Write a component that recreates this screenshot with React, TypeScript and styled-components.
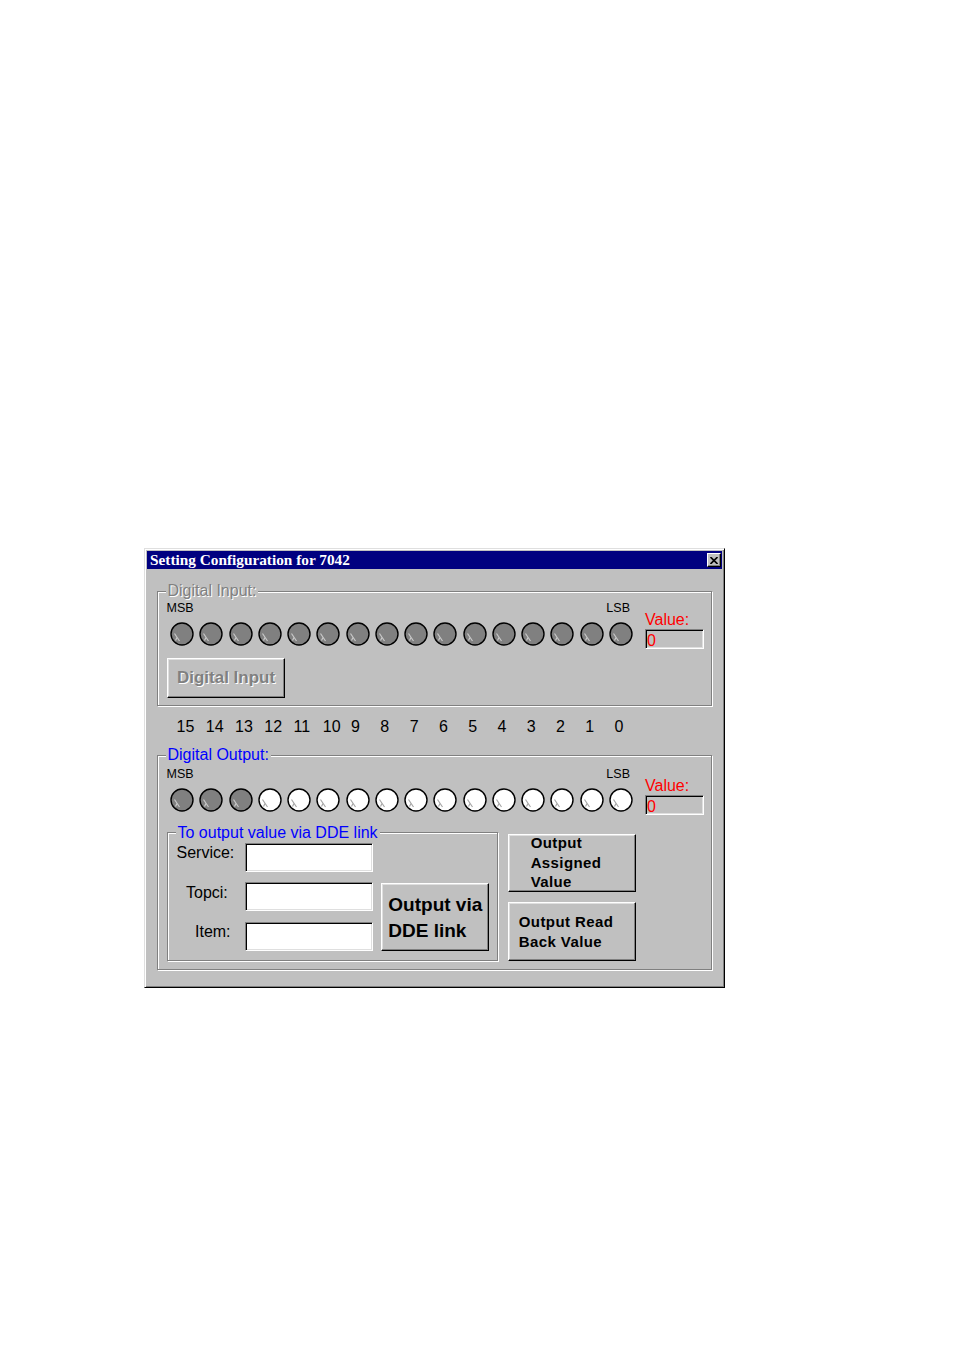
import React from 'react'
import styled, { createGlobalStyle } from 'styled-components'

const GlobalStyle = createGlobalStyle`
  html, body {
    margin: 0;
    padding: 0;
    background: #fff;
  }
  body {
    font-family: "Liberation Sans", Arial, sans-serif;
    color: #000;
  }
`

const Page = styled.div`
  padding: 548px 0 0 144px;
  min-height: 1351px;
  box-sizing: border-box;
`

const Window = styled.div`
  width: 581px;
  height: 440px;
  box-sizing: border-box;
  background: #c0c0c0;
  border: 1px solid;
  border-color: #dfdfdf #000 #000 #dfdfdf;
  box-shadow: inset 1px 1px 0 #fff, inset -1px -1px 0 #808080;
  padding: 2px;
`

const TitleBar = styled.div`
  height: 18px;
  background: #000080;
  display: flex;
  align-items: center;
  justify-content: space-between;
  padding: 0 1px 0 3px;
`

const Title = styled.span`
  font-family: "Liberation Serif", "Times New Roman", serif;
  font-weight: bold;
  font-size: 15.3px;
  line-height: 18px;
  color: #fff;
  white-space: nowrap;
`

const CloseButton = styled.div`
  width: 14px;
  height: 14px;
  box-sizing: border-box;
  background: #c0c0c0;
  border: 1px solid;
  border-color: #fff #000 #000 #fff;
  box-shadow: inset -1px -1px 0 #808080;
  display: flex;
  align-items: center;
  justify-content: center;
`

const Body = styled.div`
  padding: 14px 10px 0 10px;
`

const GroupBox = styled.fieldset<{ $top: number; $bottom: number }>`
  margin: 0;
  min-width: 0;
  box-sizing: border-box;
  padding: ${p => p.$top}px 8px ${p => p.$bottom}px 8px;
  border: 1px solid #808080;
  box-shadow: inset 1px 1px 0 #fff, 1px 1px 0 #fff;
`

const Legend = styled.legend<{ $color: string; $etched?: boolean }>`
  padding: 0 2px 0 1.5px;
  font-size: 16px;
  line-height: 16px;
  background: #c0c0c0;
  color: ${p => p.$color};
  text-shadow: ${p => (p.$etched ? '1px 1px 0 #fff' : 'none')};
  white-space: nowrap;
`

const BitRow = styled.div`
  display: flex;
  align-items: flex-start;
`

const BitColumn = styled.div`
  width: 472px;
  flex: none;
  display: flex;
  flex-direction: column;
  align-items: flex-start;
`

const EndLabels = styled.div`
  align-self: stretch;
  display: flex;
  justify-content: space-between;
  padding: 0 8px 0 0.5px;
  font-size: 12.5px;
  line-height: 14px;
`

const LedGrid = styled.div`
  display: grid;
  grid-template-columns: repeat(16, 29.27px);
  margin: 7px 0 0 4px;
`

const LedSvg = styled.svg`
  display: block;
  width: 24px;
  height: 24px;
`

const ValueColumn = styled.div`
  margin-left: 7px;
  padding-top: 9px;
  display: flex;
  flex-direction: column;
`

const ValueLabel = styled.div`
  color: #f00;
  font-size: 16px;
  line-height: 19px;
`

const ValueBox = styled.div`
  width: 59px;
  height: 20px;
  box-sizing: border-box;
  overflow: hidden;
  border: 1px solid;
  border-color: #808080 #fff #fff #808080;
  box-shadow: inset 1px 1px 0 #000, inset -1px -1px 0 #dfdfdf;
  padding: 1.5px 0 0 1px;
  color: #f00;
  font-size: 16px;
  line-height: 18px;
`

const NumberGrid = styled.div`
  display: grid;
  grid-template-columns: repeat(16, 29.27px);
  margin: 12px 0 11px 13px;
  font-size: 16px;
  line-height: 18px;
`

const BitNumber = styled.span<{ $wide: boolean }>`
  padding-left: ${p => (p.$wide ? 6.5 : 5.5)}px;
`

const RaisedButton = styled.button`
  margin: 0;
  padding: 0;
  box-sizing: border-box;
  flex: none;
  background: #c0c0c0;
  border: 1px solid;
  border-color: #fff #000 #000 #fff;
  box-shadow: inset -1px -1px 0 #808080, inset 1px 1px 0 #dfdfdf;
  display: flex;
  align-items: center;
  justify-content: center;
  overflow: hidden;
  font-family: "Liberation Sans", Arial, sans-serif;
  font-weight: bold;
  color: #000;
  text-align: left;
`

const DisabledButton = styled(RaisedButton)`
  width: 118.7px;
  height: 40px;
  margin-top: 12px;
  margin-left: 0.7px;
  font-size: 17px;
  color: #808080;
  text-shadow: 1px 1px 0 #fff;
`

const DdeButton = styled(RaisedButton)`
  width: 108px;
  height: 68px;
  margin-left: 8.3px;
  padding-top: 3px;
  align-self: flex-end;
  font-size: 19px;
  line-height: 26px;
`

const SideButton = styled(RaisedButton)<{ $height: number; $drop: number }>`
  width: 128px;
  height: ${p => p.$height}px;
  padding: ${p => p.$drop}px 12px 0 0;
  font-size: 15px;
  letter-spacing: 0.4px;
  line-height: 19.5px;
`

const ButtonText = styled.span`
  display: block;
  white-space: nowrap;
`

const DdeRow = styled.div`
  display: flex;
  margin-top: 9.7px;
`

const DdeBox = styled(GroupBox)`
  width: 331px;
  flex: none;
  margin-left: 1px;
`

const DdeContent = styled.div`
  display: flex;
  align-items: flex-start;
`

const FieldGrid = styled.div`
  display: grid;
  grid-template-columns: 69px 128px;
  grid-auto-rows: 29px;
  row-gap: 10.5px;
`

const FieldLabel = styled.div<{ $indent: number }>`
  padding: 1.5px 0 0 ${p => p.$indent}px;
  font-size: 16px;
  line-height: 18px;
  white-space: nowrap;
`

const TextField = styled.input`
  margin: 0;
  padding: 0 3px;
  width: 128px;
  height: 29px;
  box-sizing: border-box;
  background: #fff;
  border: 1px solid;
  border-color: #808080 #fff #fff #808080;
  box-shadow: inset 1px 1px 0 #000, inset -1px -1px 0 #dfdfdf;
  outline: none;
  font-family: "Liberation Sans", Arial, sans-serif;
  font-size: 14px;
`

const SideColumn = styled.div`
  margin-left: 10px;
  margin-top: 9px;
  display: flex;
  flex-direction: column;
  gap: 10px;
`

const bitNumbers = Array.from({ length: 16 }, (_, i) => 15 - i)

const Led = ({ on }: { on: boolean }) => (
  <LedSvg viewBox="0 0 24 24">
    <circle cx="12" cy="12" r="11" fill={on ? '#fff' : '#808080'} stroke="#000" strokeWidth="1.4" />
    <path
      d="M4.5 11.5 L9.5 19 M7 15.5 L5.5 18.5"
      stroke={on ? '#a8a8a8' : '#c8c8c8'}
      strokeWidth="1.2"
      fill="none"
    />
  </LedSvg>
)

const BitPanel = ({ lit, children }: { lit: boolean[]; children?: React.ReactNode }) => (
  <BitRow>
    <BitColumn>
      <EndLabels>
        <span>MSB</span>
        <span>LSB</span>
      </EndLabels>
      <LedGrid>
        {lit.map((on, i) => (
          <Led key={i} on={on} />
        ))}
      </LedGrid>
      {children}
    </BitColumn>
    <ValueColumn>
      <ValueLabel>Value:</ValueLabel>
      <ValueBox>0</ValueBox>
    </ValueColumn>
  </BitRow>
)

const inputLeds = Array(16).fill(false)
const outputLeds = bitNumbers.map(b => b < 13)

const fields = [
  { label: 'Service:', indent: 0.5 },
  { label: 'Topci:', indent: 10 },
  { label: 'Item:', indent: 19 },
]

export default function App() {
  return (
    <Page>
      <GlobalStyle />
      <Window>
        <TitleBar>
          <Title>Setting Configuration for 7042</Title>
          <CloseButton>
            <svg width="8" height="7" viewBox="0 0 8 7">
              <path d="M0.5 0 L7.5 7 M7.5 0 L0.5 7" stroke="#000" strokeWidth="1.6" />
            </svg>
          </CloseButton>
        </TitleBar>
        <Body>
          <GroupBox $top={2} $bottom={7}>
            <Legend $color="#808080" $etched>Digital Input:</Legend>
            <BitPanel lit={inputLeds}>
              <DisabledButton>
                <ButtonText>Digital Input</ButtonText>
              </DisabledButton>
            </BitPanel>
          </GroupBox>

          <NumberGrid>
            {bitNumbers.map(n => (
              <BitNumber key={n} $wide={n > 9}>{n}</BitNumber>
            ))}
          </NumberGrid>

          <GroupBox $top={4} $bottom={8.5}>
            <Legend $color="#0000ff">Digital Output:</Legend>
            <BitPanel lit={outputLeds} />
            <DdeRow>
              <DdeBox $top={2} $bottom={8}>
                <Legend $color="#0000ff">To output value via DDE link</Legend>
                <DdeContent>
                  <FieldGrid>
                    {fields.map(f => (
                      <React.Fragment key={f.label}>
                        <FieldLabel $indent={f.indent}>{f.label}</FieldLabel>
                        <TextField />
                      </React.Fragment>
                    ))}
                  </FieldGrid>
                  <DdeButton>
                    <ButtonText>
                      Output via
                      <br />
                      DDE link
                    </ButtonText>
                  </DdeButton>
                </DdeContent>
              </DdeBox>
              <SideColumn>
                <SideButton $height={58} $drop={0}>
                  <ButtonText>
                    Output
                    <br />
                    Assigned
                    <br />
                    Value
                  </ButtonText>
                </SideButton>
                <SideButton $height={59} $drop={1.5}>
                  <ButtonText>
                    Output Read
                    <br />
                    Back Value
                  </ButtonText>
                </SideButton>
              </SideColumn>
            </DdeRow>
          </GroupBox>
        </Body>
      </Window>
    </Page>
  )
}
